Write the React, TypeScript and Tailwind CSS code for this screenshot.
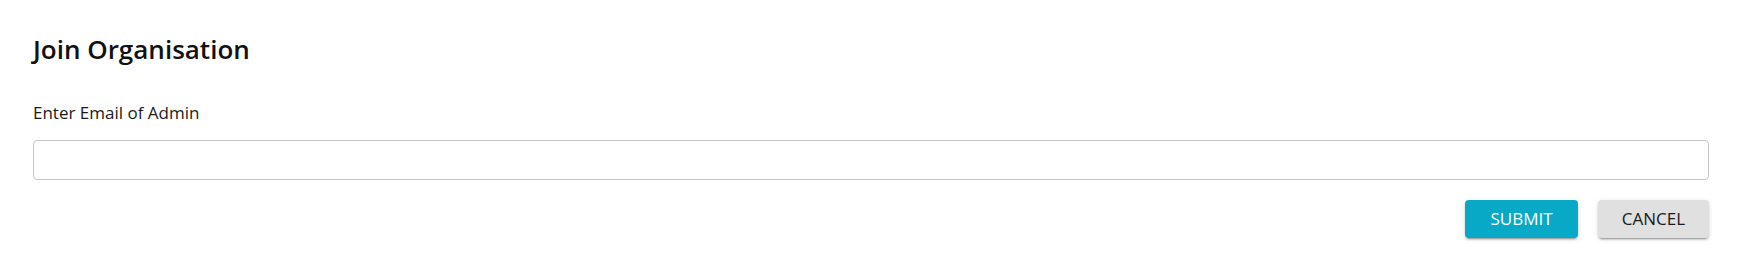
import React from 'react';

export default function App() {
  return (
    <div className="w-full min-h-[269px] bg-white px-[33px] pt-[31px] font-['Open_Sans','Noto_Sans',sans-serif] text-[rgba(0,0,0,0.87)]">
      {/* Heading */}
      <h2 className="text-[26px] leading-[36px] font-semibold text-[#111]">Join Organisation</h2>

      {/* Email field */}
      <label htmlFor="admin-email" className="block mt-[36px] text-[17px] leading-[20px] text-[#1a1a1a]">
        Enter Email of Admin
      </label>
      <input
        id="admin-email"
        type="email"
        className="block w-full h-[40px] mt-[17px] rounded-[4px] border border-[#c4c4c4] px-3 text-[16px] outline-none focus:border-[#07a9c6]"
      />

      {/* Actions */}
      <div className="flex justify-end gap-[20px] mt-[20px]">
        <button className="w-[113px] h-[38px] rounded-[4px] bg-[#07a9c6] text-white text-[17px] font-medium uppercase shadow-[0_3px_1px_-2px_rgba(0,0,0,0.2),0_2px_2px_0_rgba(0,0,0,0.14),0_1px_5px_0_rgba(0,0,0,0.12)]">
          Submit
        </button>
        <button className="w-[111px] h-[38px] rounded-[4px] bg-[#e0e0e0] text-[#1a1a1a] text-[17px] font-medium uppercase shadow-[0_3px_1px_-2px_rgba(0,0,0,0.2),0_2px_2px_0_rgba(0,0,0,0.14),0_1px_5px_0_rgba(0,0,0,0.12)]">
          Cancel
        </button>
      </div>
    </div>
  );
}
